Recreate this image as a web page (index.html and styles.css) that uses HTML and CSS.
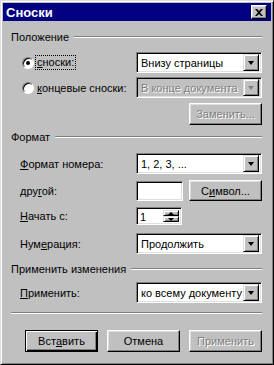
FILE: index.html
```html
<!DOCTYPE html>
<html lang="ru">
<head>
  <meta charset="UTF-8" />
  <title>Сноски</title>
  <link rel="stylesheet" href="styles.css">
</head>
<body>

  <div class="window">
    <div class="titlebar">
      <span class="title">Сноски</span>
      <span class="close-btn">
        <svg width="8" height="7" viewBox="0 0 8 7"><path d="M0 0h2l2 2 2-2h2L5 3.5 8 7H6L4 5 2 7H0l3-3.5z" fill="#000"/></svg>
      </span>
    </div>

    <div class="content">
      <!-- Положение -->
      <div class="group g-pos"><span>Положение</span><i class="line"></i></div>

      <div class="row row-first">
        <div class="radio-label">
          <span class="radio checked"></span>
          <span class="focus"><u>с</u>носки:</span>
        </div>
        <div class="select"><span class="value">Внизу страницы</span><span class="arrow-btn"><i class="tri"></i></span></div>
      </div>

      <div class="row row-second">
        <div class="radio-label">
          <span class="radio"></span>
          <span class="plain"><u>к</u>онцевые сноски:</span>
        </div>
        <div class="select disabled"><span class="value">В конце документа</span><span class="arrow-btn"><i class="tri"></i></span></div>
      </div>

      <div class="row row-replace">
        <span class="btn disabled">Заменить...</span>
      </div>

      <!-- Формат -->
      <div class="group g-format"><span>Формат</span><i class="line"></i></div>

      <div class="row row-numfmt">
        <span class="label"><u>Ф</u>ормат номера:</span>
        <div class="select"><span class="value">1, 2, 3, ...</span><span class="arrow-btn"><i class="tri"></i></span></div>
      </div>

      <div class="row row-other">
        <span class="label">дру<u>г</u>ой:</span>
        <div class="input"></div>
        <span class="btn">С<u>и</u>мвол...</span>
      </div>

      <div class="row row-start">
        <span class="label"><u>Н</u>ачать с:</span>
        <div class="spin">
          <span class="value">1</span>
          <span class="spin-btns">
            <span class="spin-btn"><i class="tri up"></i></span>
            <span class="spin-btn"><i class="tri small"></i></span>
          </span>
        </div>
      </div>

      <div class="row row-numbering">
        <span class="label">Нум<u>е</u>рация:</span>
        <div class="select"><span class="value">Продолжить</span><span class="arrow-btn"><i class="tri"></i></span></div>
      </div>

      <!-- Применить изменения -->
      <div class="group g-apply"><span>Применить изменения</span><i class="line"></i></div>

      <div class="row row-applyto">
        <span class="label"><u>П</u>рименить:</span>
        <div class="select"><span class="value">ко всему документу</span><span class="arrow-btn"><i class="tri"></i></span></div>
      </div>

      <div class="separator"></div>

      <div class="buttons">
        <span class="btn default">Вст<u>а</u>вить</span>
        <span class="btn">Отмена</span>
        <span class="btn disabled">Применить</span>
      </div>
    </div>
  </div>

</body>
</html>
```

FILE: styles.css
```css
body {
  margin: 0;
  padding: 0;
  background: #c0c0c0;
  font-family: "Liberation Sans", Arial, sans-serif;
  font-size: 11px;
  color: #000;
}

u {
  text-decoration: underline;
  text-underline-offset: 1px;
}

.window {
  width: 274px;
  height: 365px;
  box-sizing: border-box;
  background: #c0c0c0;
  border: 1px solid;
  border-color: #dfdfdf #000 #000 #dfdfdf;
  box-shadow: inset 1px 1px #fff, inset -1px -1px #808080;
  padding: 2px;
}

.titlebar {
  height: 18px;
  background: #000080;
  display: flex;
  align-items: center;
  justify-content: space-between;
  padding: 0 4px 0 3px;
}

.title {
  color: #fff;
  font-weight: bold;
  font-size: 13px;
}

.close-btn {
  width: 16px;
  height: 14px;
  box-sizing: border-box;
  background: #c0c0c0;
  border: 1px solid;
  border-color: #fff #000 #000 #fff;
  box-shadow: inset -1px -1px #808080, inset 1px 1px #dfdfdf;
  display: flex;
  align-items: center;
  justify-content: center;
}

.content {
  padding: 0 9px 0 8px;
}

/* group headers with etched line */
.group {
  height: 13px;
  display: flex;
  align-items: center;
  gap: 5px;
}

.group .line {
  flex: 1;
  height: 0;
  border-top: 1px solid #808080;
  border-bottom: 1px solid #fff;
}

.g-pos { margin-top: 9px; }
.g-format { margin-top: 5px; }
.g-apply { margin-top: 8px; }

.row {
  display: flex;
  align-items: center;
}

.row-first { margin-top: 9px; }
.row-second { margin-top: 4px; }
.row-replace { margin-top: 5px; justify-content: flex-end; }
.row-numfmt { margin-top: 10px; }
.row-other { margin-top: 6px; }
.row-start { margin-top: 6px; }
.row-numbering { margin-top: 8px; }
.row-applyto { margin-top: 7px; }

.label {
  width: 116px;
  padding-left: 9px;
}

.radio-label {
  width: 125px;
  display: flex;
  align-items: center;
  padding-left: 11px;
  box-sizing: border-box;
}

.radio {
  width: 12px;
  height: 12px;
  box-sizing: border-box;
  border-radius: 50%;
  background: #fff;
  border: 1px solid;
  border-color: #808080 #fff #fff #808080;
  box-shadow: inset 1px 1px #000;
  display: flex;
  align-items: center;
  justify-content: center;
  margin-right: 1px;
}

.radio.checked::after {
  content: "";
  width: 4px;
  height: 4px;
  border-radius: 50%;
  background: #000;
}

.focus {
  border: 1px dotted #000;
  padding: 0 1px;
  line-height: 13px;
}

.plain {
  padding: 0 2px;
}

/* combo boxes */
.select {
  width: 126px;
  height: 21px;
  box-sizing: border-box;
  background: #fff;
  border: 1px solid;
  border-color: #808080 #fff #fff #808080;
  box-shadow: inset 1px 1px #000, inset -1px -1px #dfdfdf;
  display: flex;
  align-items: center;
  padding: 2px;
}

.select .value {
  flex: 1;
  padding-left: 2px;
  white-space: nowrap;
  overflow: hidden;
}

.arrow-btn {
  width: 16px;
  height: 17px;
  box-sizing: border-box;
  background: #c0c0c0;
  border: 1px solid;
  border-color: #dfdfdf #000 #000 #dfdfdf;
  box-shadow: inset 1px 1px #fff, inset -1px -1px #808080;
  display: flex;
  align-items: center;
  justify-content: center;
}

.tri {
  width: 0;
  height: 0;
  border-left: 3.5px solid transparent;
  border-right: 3.5px solid transparent;
  border-top: 4px solid #000;
}

.tri.small {
  border-left-width: 3px;
  border-right-width: 3px;
  border-top-width: 3px;
}

.tri.up {
  border-left: 3px solid transparent;
  border-right: 3px solid transparent;
  border-top: 0;
  border-bottom: 3px solid #000;
}

.select.disabled {
  background: #c0c0c0;
  color: #808080;
}

.select.disabled .value {
  text-shadow: 1px 1px #fff;
}

.select.disabled .tri {
  border-top-color: #808080;
}

.input {
  width: 47px;
  height: 20px;
  box-sizing: border-box;
  background: #fff;
  border: 1px solid;
  border-color: #808080 #fff #fff #808080;
  box-shadow: inset 1px 1px #000, inset -1px -1px #dfdfdf;
}

.row-other .btn {
  margin-left: 6px;
  height: 21px;
}

/* spin box */
.spin {
  width: 46px;
  height: 18px;
  box-sizing: border-box;
  background: #fff;
  border: 1px solid;
  border-color: #808080 #fff #fff #808080;
  box-shadow: inset 1px 1px #000, inset -1px -1px #dfdfdf;
  display: flex;
  padding: 2px;
}

.spin .value {
  flex: 1;
  padding-left: 1px;
  line-height: 14px;
}

.spin-btns {
  width: 16px;
  display: flex;
  flex-direction: column;
}

.spin-btn {
  flex: 1;
  box-sizing: border-box;
  background: #c0c0c0;
  border: 1px solid;
  border-color: #dfdfdf #000 #000 #dfdfdf;
  box-shadow: inset 1px 1px #fff, inset -1px -1px #808080;
  display: flex;
  align-items: center;
  justify-content: center;
}

/* push buttons */
.btn {
  width: 73px;
  height: 22px;
  box-sizing: border-box;
  background: #c0c0c0;
  border: 1px solid;
  border-color: #fff #000 #000 #fff;
  box-shadow: inset -1px -1px #808080, inset 1px 1px #dfdfdf;
  display: flex;
  align-items: center;
  justify-content: center;
}

.btn.disabled {
  color: #808080;
  text-shadow: 1px 1px #fff;
}

.btn.default {
  border: 1px solid #000;
  box-shadow: inset 1px 1px #fff, inset -1px -1px #000, inset -2px -2px #808080;
}

.separator {
  margin-top: 9px;
  border-top: 1px solid #808080;
  border-bottom: 1px solid #fff;
}

.buttons {
  margin-top: 16px;
  display: flex;
  justify-content: flex-end;
  gap: 9px;
}
```
